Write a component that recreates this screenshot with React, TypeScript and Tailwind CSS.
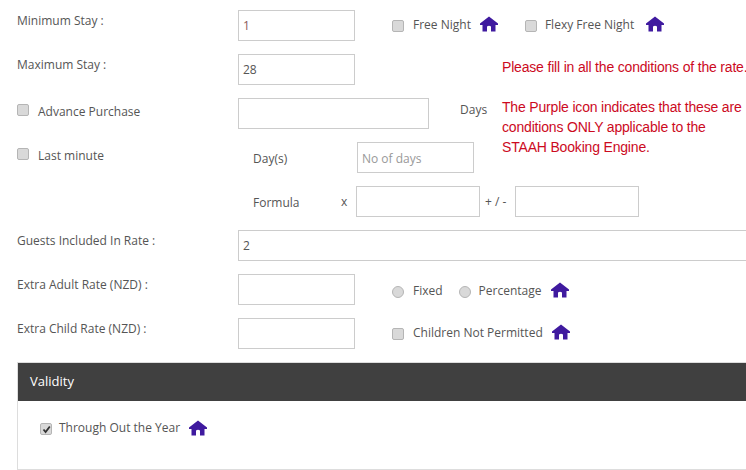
import type { ReactNode } from 'react';

function HomeIcon() {
  return (
    <svg width="18" height="16" viewBox="0 0 18 16" className="mt-[-2px] shrink-0">
      <path d="M9 0.5 L18 7.6 V9 H15.5 V15.5 H11 V10.5 Q9 9.2 7 10.5 V15.5 H2.5 V9 H0 V7.6 Z" fill="#3f1a9f" />
    </svg>
  );
}

function Check({ checked }: { checked?: boolean }) {
  return (
    <span className="flex h-[12px] w-[12px] shrink-0 items-center justify-center rounded-[2px] border border-[#b5b5b5] bg-[#d9d9d9]">
      {checked && (
        <svg width="9" height="9" viewBox="0 0 9 9">
          <path d="M1.5 4.5 L3.6 7 L7.8 1.5" fill="none" stroke="#333" strokeWidth="1.8" />
        </svg>
      )}
    </span>
  );
}

function Radio() {
  return <span className="block h-[12px] w-[12px] shrink-0 rounded-full border border-[#b5b5b5] bg-[#d9d9d9]" />;
}

function Field({ className, value, placeholder }: { className: string; value?: string; placeholder?: string }) {
  return (
    <div className={`flex h-[31px] shrink-0 items-center border border-[#cccccc] px-[4px] text-[12px] ${className}`}>
      {value}
      {placeholder && <span className="pt-[2px] text-[#999999]">{placeholder}</span>}
    </div>
  );
}

function Row({ label, children }: { label: ReactNode; children: ReactNode }) {
  return (
    <div className="mb-[13px] flex h-[31px] items-start">
      <div className="w-[221px] shrink-0 pt-px leading-[20px]">{label}</div>
      {children}
    </div>
  );
}

export default function App() {
  return (
    <div className="h-[470px] w-[746px] overflow-hidden bg-white pl-[17px] pt-[10px] font-['Open_Sans',sans-serif] text-[12px] text-[#555555]">
      <Row label="Minimum Stay :">
        <Field className="w-[117px] text-[#8a5a5a]" value="1" />
        <div className="flex h-[31px] items-center pb-[1px]">
          <div className="ml-[37px] mt-[2px]"><Check /></div>
          <span className="ml-[9px]">Free Night</span>
          <div className="ml-[9px]"><HomeIcon /></div>
          <div className="ml-[27px] mt-[2px]"><Check /></div>
          <span className="ml-[8px]">Flexy Free Night</span>
          <div className="ml-[12px]"><HomeIcon /></div>
        </div>
      </Row>

      <div className="flex h-[132px]">
        <div className="w-[485px] shrink-0">
          <Row label="Maximum Stay :">
            <Field className="w-[117px]" value="28" />
          </Row>
          <Row
            label={
              <div className="flex items-start">
                <div className="pt-[5px]"><Check /></div>
                <span className="ml-[9px] pt-[3px]">Advance Purchase</span>
              </div>
            }
          >
            <Field className="w-[191px]" />
            <span className="ml-[31px] pt-[3px]">Days</span>
          </Row>
          <Row
            label={
              <div className="flex items-start">
                <div className="pt-[5px]"><Check /></div>
                <span className="ml-[9px] pt-[3px]">Last minute</span>
              </div>
            }
          >
            <div className="flex h-[31px] items-center">
              <span className="ml-[15px] w-[104px] pt-[2px]">Day(s)</span>
              <Field className="w-[117px]" placeholder="No of days" />
            </div>
          </Row>
        </div>
        <div className="pt-[3px] font-['Liberation_Sans',sans-serif] text-[14px] leading-[20px] tracking-[-0.18px] text-[#cc0a1e] whitespace-nowrap">
          <p>Please fill in all the conditions of the rate.</p>
          <p className="mt-[20px]">The Purple icon indicates that these are</p>
          <p>conditions ONLY applicable to the</p>
          <p>STAAH Booking Engine.</p>
        </div>
      </div>

      <Row label="">
        <div className="flex h-[31px] items-center">
          <span className="ml-[15px] w-[88px] pt-[2px]">Formula</span>
          <span className="w-[15px]">x</span>
          <Field className="w-[124px]" />
          <span className="ml-[5px] w-[30px]">+ / -</span>
          <Field className="w-[124px]" />
        </div>
      </Row>

      <Row label="Guests Included In Rate :">
        <Field className="w-[520px]" value="2" />
      </Row>

      <Row label="Extra Adult Rate (NZD) :">
        <Field className="w-[117px]" />
        <div className="flex h-[31px] items-center pt-[3px]">
          <div className="ml-[37px] mt-[2px]"><Radio /></div>
          <span className="ml-[9px]">Fixed</span>
          <div className="ml-[16px] mt-[2px]"><Radio /></div>
          <span className="ml-[8px]">Percentage</span>
          <div className="ml-[9px]"><HomeIcon /></div>
        </div>
      </Row>

      <Row label="Extra Child Rate (NZD) :">
        <Field className="w-[117px]" />
        <div className="flex h-[31px] items-center pb-[1px]">
          <div className="ml-[37px] mt-[2px]"><Check /></div>
          <span className="ml-[9px]">Children Not Permitted</span>
          <div className="ml-[9px]"><HomeIcon /></div>
        </div>
      </Row>

      <div className="h-[108px] w-[740px] border border-[#dddddd]">
        <div className="flex h-[38px] items-center bg-[#404040] pl-[12px] text-[13px] text-white">Validity</div>
        <div className="flex items-center pl-[22px] pt-[18px]">
          <div className="mt-[2px]"><Check checked /></div>
          <span className="ml-[7px]">Through Out the Year</span>
          <div className="ml-[9px] mt-[1px]"><HomeIcon /></div>
        </div>
      </div>
    </div>
  );
}
